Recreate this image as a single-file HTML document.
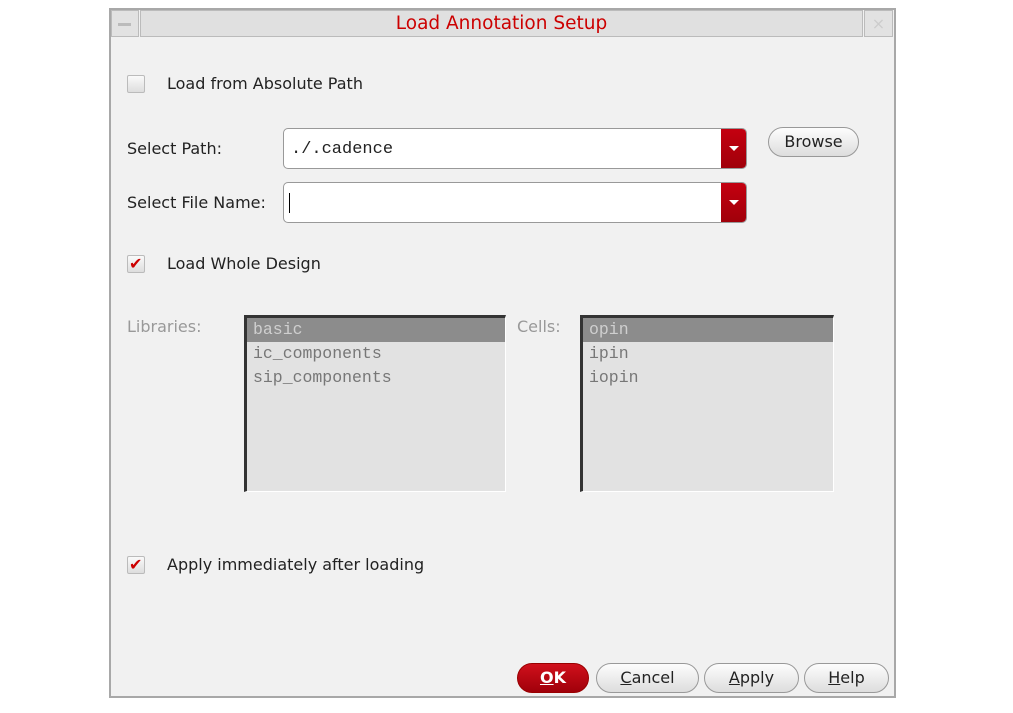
<!DOCTYPE html>
<html><head><style>
*{box-sizing:border-box;margin:0;padding:0}
body{width:1013px;height:713px;background:#fff;position:relative;font-family:"DejaVu Sans","Liberation Sans",sans-serif;font-size:16px;color:#222;overflow:hidden}
.abs{position:absolute}
#dlg{left:109px;top:8px;width:787px;height:690px;background:#f1f1f1;border:2px solid #a8a8a8}
.lbl{position:absolute;white-space:nowrap}
.cb{position:absolute;width:18px;height:18px;border:1px solid #bbb;border-radius:2px;background:linear-gradient(#fafafa,#ddd)}
.chk{position:absolute;color:#c00;font-size:16px;line-height:18px}
.combo{position:absolute;background:#fff;border:1px solid #999;border-radius:5px;overflow:hidden}
.combo .dd{position:absolute;right:0;top:0;bottom:0;width:25px;background:linear-gradient(#c40010,#a0000a)}
.combo .dd:after{content:"";position:absolute;left:8px;top:17px;border-left:5px solid transparent;border-right:5px solid transparent;border-top:5px solid #fff}
.btn{position:absolute;height:30px;border:1px solid #999;border-radius:15px;background:linear-gradient(#fdfdfd,#ddd);text-align:center;line-height:28px;font-size:16px}
.list{position:absolute;background:#e2e2e2;border-left:3px solid #333;border-top:3px solid #333;border-right:1px solid #fff;border-bottom:1px solid #fff;font-family:"Liberation Mono",monospace;font-size:16.5px;color:#777}
.list div{height:24px;line-height:24px;padding-left:6px}
.list .sel{background:#8c8c8c;color:#cfcfcf}
</style></head><body>
<div id="dlg" class="abs"></div>
<div class="abs" style="left:111px;top:10px;width:28px;height:27px;background:#e2e2e2;border:1px solid #bbb"></div>
<div class="abs" style="left:118px;top:23px;width:13px;height:3px;background:#bbb"></div>
<div class="abs" style="left:140px;top:10px;width:723px;height:27px;background:#e0e0e0;border:1px solid #bbb;text-align:center;color:#cc0000;font-size:18.5px;line-height:26px">Load Annotation Setup</div>
<div class="abs" style="left:864px;top:10px;width:29px;height:27px;background:#e2e2e2;border:1px solid #bbb;color:#ccc;text-align:center;line-height:26px">⨯</div>

<div class="cb" style="left:127px;top:75px"></div>
<div class="lbl" style="left:167px;top:74px">Load from Absolute Path</div>

<div class="lbl" style="left:127px;top:139px">Select Path:</div>
<div class="combo" style="left:283px;top:128px;width:464px;height:41px"><span style="position:absolute;left:7px;top:11px;font-family:'Liberation Mono',monospace;font-size:17px">./.cadence</span><div class="dd"></div></div>
<div class="btn" style="left:768px;top:127px;width:91px">Browse</div>

<div class="lbl" style="left:127px;top:193px">Select File Name:</div>
<div class="combo" style="left:283px;top:182px;width:464px;height:41px"><span style="position:absolute;left:5px;top:10px;width:1px;height:20px;background:#000"></span><div class="dd"></div></div>

<div class="cb" style="left:127px;top:255px"></div>
<div class="chk" style="left:129px;top:255px">✔</div>
<div class="lbl" style="left:167px;top:254px">Load Whole Design</div>

<div class="lbl" style="left:127px;top:317px;color:#999">Libraries:</div>
<div class="list" style="left:244px;top:315px;width:262px;height:177px"><div class="sel">basic</div><div>ic_components</div><div>sip_components</div></div>
<div class="lbl" style="left:517px;top:317px;color:#999">Cells:</div>
<div class="list" style="left:580px;top:315px;width:254px;height:177px"><div class="sel">opin</div><div>ipin</div><div>iopin</div></div>

<div class="cb" style="left:127px;top:556px"></div>
<div class="chk" style="left:129px;top:556px">✔</div>
<div class="lbl" style="left:167px;top:555px">Apply immediately after loading</div>

<div class="btn" style="left:517px;top:663px;width:72px;background:linear-gradient(#d0101c,#a0000a);border-color:#900;color:#fff;font-weight:bold"><u>O</u>K</div>
<div class="btn" style="left:596px;top:663px;width:103px"><u>C</u>ancel</div>
<div class="btn" style="left:704px;top:663px;width:95px"><u>A</u>pply</div>
<div class="btn" style="left:804px;top:663px;width:85px"><u>H</u>elp</div>
</body></html>
